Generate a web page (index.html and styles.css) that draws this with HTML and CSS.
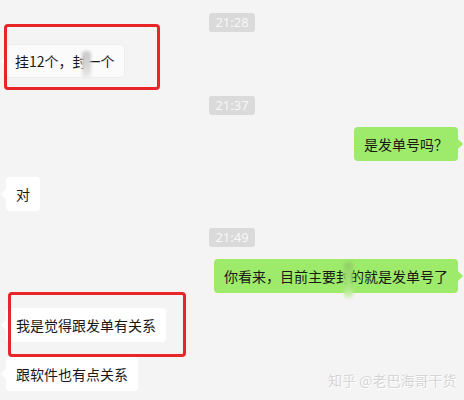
FILE: index.html
```html
<!DOCTYPE html>
<html lang="zh-CN">
<head>
  <meta charset="UTF-8">
  <title>聊天记录</title>
  <link rel="stylesheet" href="styles.css">
</head>
<body>
  <div class="chat">
    <div class="time t1">21:28</div>
    <div class="msg left m1 faded">挂12个，封一个<span class="smudge s1"></span></div>
    <div class="time t2">21:37</div>
    <div class="msg right m2">是发单号吗？</div>
    <div class="msg left m3">对</div>
    <div class="time t3">21:49</div>
    <div class="msg right m4">你看来，目前主要封的就是发单号了<span class="smudge s2"></span></div>
    <div class="msg left m5">我是觉得跟发单有关系</div>
    <div class="msg left m6">跟软件也有点关系</div>

    <div class="mark box1"></div>
    <div class="mark box2"></div>
    <div class="watermark">知乎 @老巴海哥干货</div>
  </div>
</body>
</html>
```

FILE: styles.css
```css
body {
  margin: 0;
  background: #f4f4f4;
  font-family: "Noto Sans CJK SC", "Microsoft YaHei", sans-serif;
}
.chat {
  position: relative;
  height: 400px;
  overflow: hidden;
  display: flex;
  flex-direction: column;
  padding-top: 13px;
  box-sizing: border-box;
}
.time {
  align-self: center;
  background: #dadada;
  color: #f7f7f7;
  font-size: 13px;
  line-height: 19px;
  padding: 0 6px;
  border-radius: 3px;
  font-family: "Noto Sans", sans-serif;
}
.msg {
  position: relative;
  font-size: 14px;
  line-height: 20px;
  padding: 7px 10px;
  border-radius: 4px;
  color: #191919;
}
.msg::before {
  content: "";
  position: absolute;
  top: 12px;
  border: 5px solid transparent;
}
.left {
  align-self: flex-start;
  margin-left: 6px;
  background: #fff;
}
.left::before {
  left: -10px;
  border-right-color: #fff;
}
.right {
  align-self: flex-end;
  margin-right: 6px;
  background: #9eea6a;
}
.right::before {
  right: -10px;
  border-left-color: #9eea6a;
}
.faded {
  background: #fbfbfb;
  box-shadow: inset 0 0 0 1px #ececec;
  padding-left: 9px;
}
.m1 { margin-top: 12px; }
.t2 { margin-top: 18px; }
.m2 { margin-top: 12px; }
.m3 { margin-top: 16px; }
.t3 { margin-top: 17px; }
.m4 { margin-top: 12px; }
.m5 { margin-top: 15px; }
.m6 { margin-top: 15px; }

.smudge {
  position: absolute;
  width: 9px;
  border-radius: 4px;
  filter: blur(1.5px);
}
.s1 {
  left: 76px;
  top: 7px;
  height: 28px;
  background: linear-gradient(#c8c8c8, #d8d8d8 60%, #f0f0f0);
}
.s2 {
  left: 130px;
  top: 3px;
  height: 36px;
  background: linear-gradient(#8fcf63, #a6e67a 70%, #d8f3c4);
}

.mark {
  position: absolute;
  border: 3px solid #e8262a;
  border-radius: 4px;
}
.box1 {
  left: 4px;
  top: 24px;
  width: 150px;
  height: 60px;
}
.box2 {
  left: 8px;
  top: 292px;
  width: 172px;
  height: 59px;
}
.watermark {
  position: absolute;
  left: 328px;
  top: 370px;
  font-size: 14px;
  color: #d4d4d4;
  text-shadow: 0 0 1px #fff, 1px 1px 0 #fff;
}
```
